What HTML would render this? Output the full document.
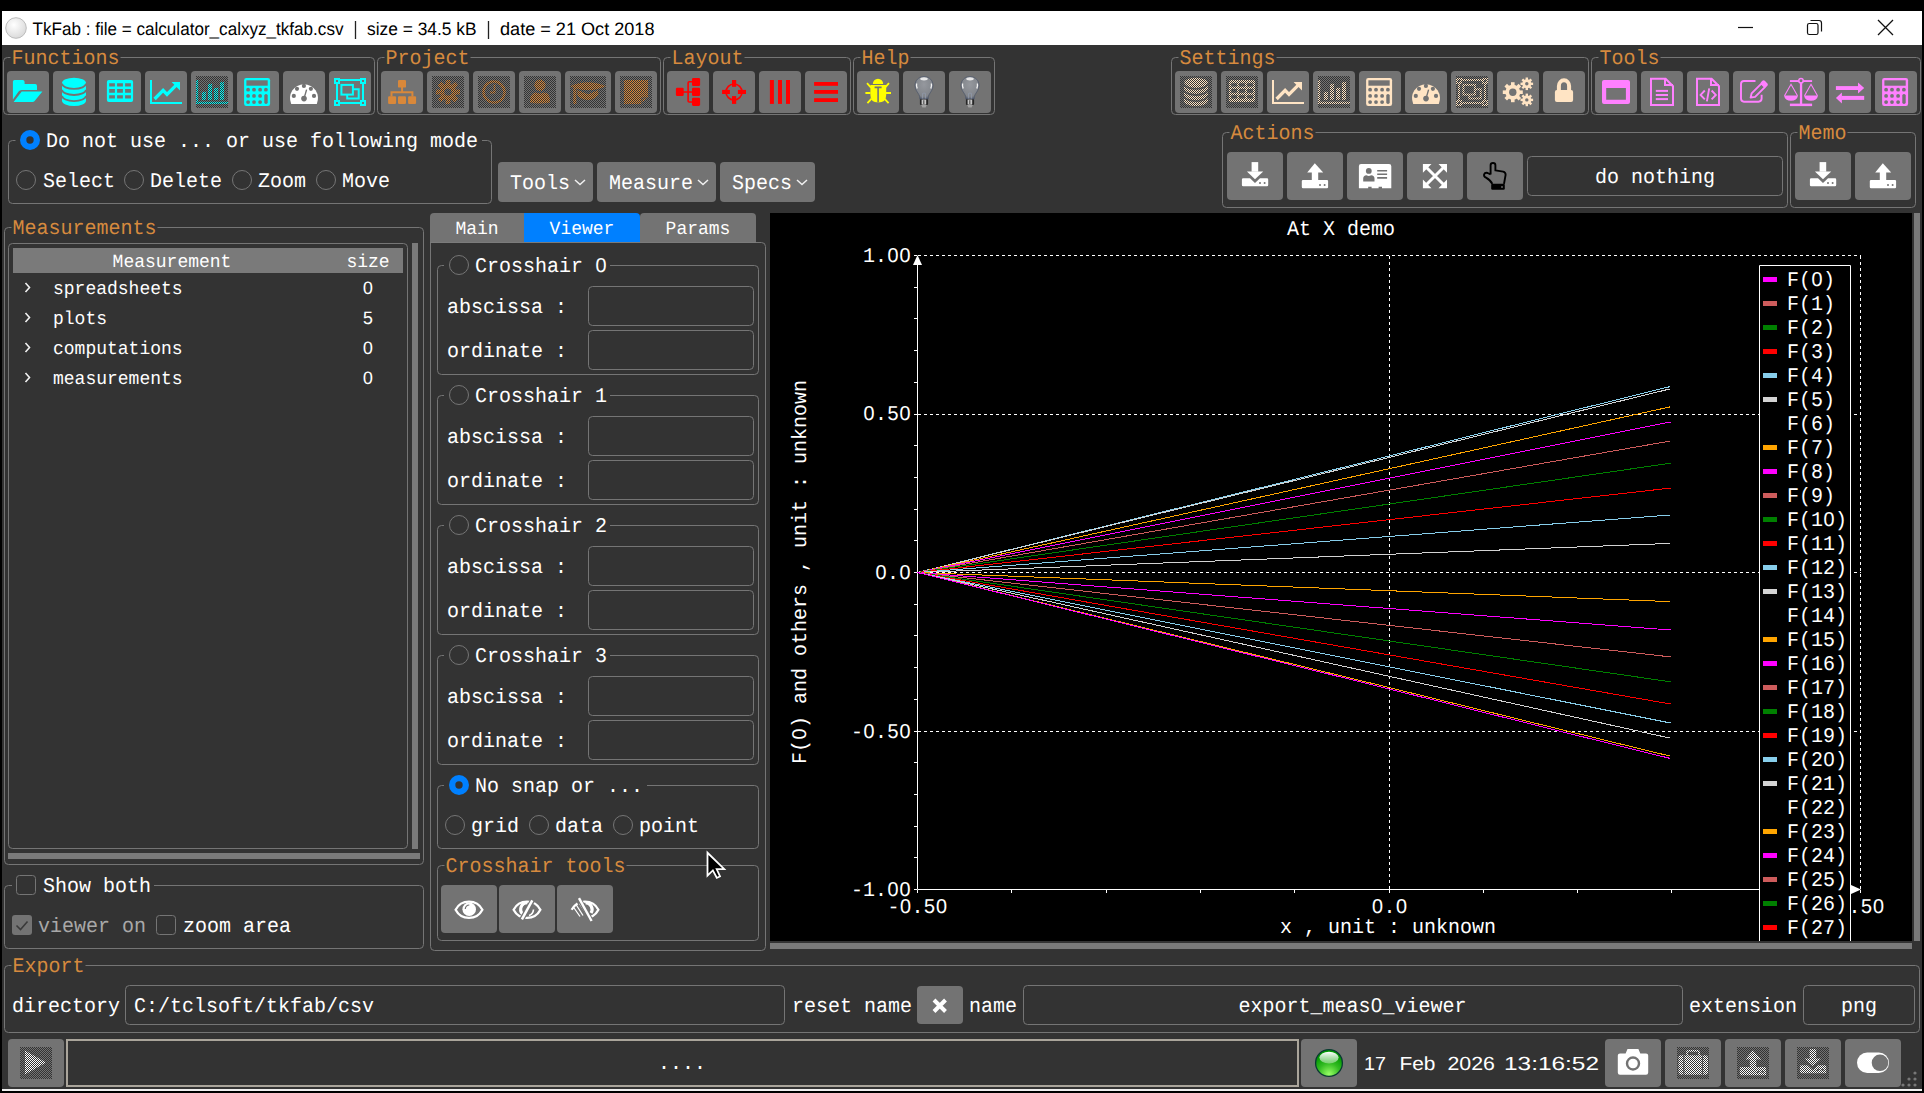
<!DOCTYPE html>
<html><head><meta charset="utf-8"><title>TkFab</title>
<style>html,body{margin:0;padding:0;background:#000;overflow:hidden;width:1924px;height:1093px}svg{display:block}</style>
</head><body>
<svg width="1924" height="1093" viewBox="0 0 1924 1093" style="font-family:'Liberation Mono';text-rendering:geometricPrecision">
<rect x="0" y="0" width="1924" height="1093" rx="0" fill="#000000" />
<rect x="2" y="45" width="1920" height="1044" rx="0" fill="#333333" />
<rect x="2" y="11" width="1920" height="34" rx="0" fill="#ffffff" />
<rect x="2" y="1089" width="1920" height="2" rx="0" fill="#f0f0f0" />
<defs><radialGradient id="tg" cx="0.4" cy="0.35" r="0.7"><stop offset="0" stop-color="#ffffff"/><stop offset="1" stop-color="#d8d8d8"/></radialGradient><radialGradient id="led" cx="0.5" cy="0.3" r="0.7"><stop offset="0" stop-color="#e8ffe0"/><stop offset="0.35" stop-color="#22bb11"/><stop offset="0.8" stop-color="#119900"/><stop offset="1" stop-color="#66dd44"/></radialGradient><pattern id="stip" width="2" height="2" patternUnits="userSpaceOnUse"><rect x="0" y="0" width="1" height="1" fill="#333333"/><rect x="1" y="1" width="1" height="1" fill="#333333"/></pattern></defs>
<circle cx="16" cy="28" r="10.3" fill="url(#tg)" stroke="#bdbdbd" stroke-width="1"/>
<text x="32.5" y="35" font-family="Liberation Sans" font-size="18" fill="#000000" textLength="311" lengthAdjust="spacingAndGlyphs" xml:space="preserve">TkFab : file = calculator_calxyz_tkfab.csv</text>
<text x="367" y="35" font-family="Liberation Sans" font-size="18" fill="#000000" textLength="109.5" lengthAdjust="spacingAndGlyphs" xml:space="preserve">size = 34.5 kB</text>
<text x="500" y="35" font-family="Liberation Sans" font-size="18" fill="#000000" textLength="154.5" lengthAdjust="spacingAndGlyphs" xml:space="preserve">date = 21 Oct 2018</text>
<path d="M355.5,21 V39 M488.5,21 V39" stroke="#222" stroke-width="1.3"/>
<path d="M1738,27.5 H1753" stroke="#111" stroke-width="1.2"/>
<rect x="1807.5" y="23.5" width="10.5" height="11" rx="1.8" fill="none" stroke="#111" stroke-width="1.2"/>
<path d="M1810.5,20.5 H1819 Q1821.5,20.5 1821.5,23 V31.5" fill="none" stroke="#111" stroke-width="1.2"/>
<path d="M1878,20 L1893,35 M1893,20 L1878,35" stroke="#111" stroke-width="1.3"/>
<path d="M10.5,57.5 L7.5,57.5 Q3.5,57.5 3.5,61.5 L3.5,110.5 Q3.5,114.5 7.5,114.5 L370.5,114.5 Q374.5,114.5 374.5,110.5 L374.5,61.5 Q374.5,57.5 370.5,57.5 L120.5,57.5" fill="none" stroke="#757575" stroke-width="1"/>
<text x="11.5" y="64.0" font-family="Liberation Mono" font-size="20" fill="#d68a3e" text-anchor="start" xml:space="preserve"  transform="matrix(1 0 0 1.04 0 -2.560)">Functions</text>
<rect x="7" y="71" width="42" height="42" rx="4" fill="#737373" />
<g transform="translate(12.0,76.0)">
<path d="M0.9,5.6 Q0.9,3.9 2.6,3.9 H10.6 Q12.6,3.9 12.6,5.9 V7.9 H23.2 Q25,7.9 25,9.9 V14 H9.6 Q7.6,14 6.6,15.6 L0.9,23.5 Z" fill="#00ffff"/><path d="M9.7,15.6 H30.4 L22.4,25.3 Q21.7,26.1 20.6,26.1 H1.6 Z" fill="#00ffff"/>
</g>
<rect x="53" y="71" width="42" height="42" rx="4" fill="#737373" />
<g transform="translate(58.0,76.0)">
<path d="M4,7 A12,5.3 0 0 1 28,7 V24.8 A12,5.3 0 0 1 4,24.8 Z" fill="#00ffff"/><path d="M4,7.6 A12,5.3 0 0 0 28,7.6 M4,13.7 A12,5.3 0 0 0 28,13.7 M4,19.8 A12,5.3 0 0 0 28,19.8" fill="none" stroke="#737373" stroke-width="1.8"/>
</g>
<rect x="99" y="71" width="42" height="42" rx="4" fill="#737373" />
<g transform="translate(104.0,76.0)">
<path fill-rule="evenodd" d="M4.9,3.9 H27.1 Q29.1,3.9 29.1,5.9 V24.1 Q29.1,26.1 27.1,26.1 H4.9 Q2.9,26.1 2.9,24.1 V5.9 Q2.9,3.9 4.9,3.9 Z M5.2,7.3 H10.9 V10.6 H5.2 Z M5.2,13.1 H10.9 V16.7 H5.2 Z M5.2,19.3 H10.9 V22.6 H5.2 Z M13.1,7.3 H18.9 V10.6 H13.1 Z M13.1,13.1 H18.9 V16.7 H13.1 Z M13.1,19.3 H18.9 V22.6 H13.1 Z M21.1,7.3 H26.9 V10.6 H21.1 Z M21.1,13.1 H26.9 V16.7 H21.1 Z M21.1,19.3 H26.9 V22.6 H21.1 Z" fill="#00ffff"/>
</g>
<rect x="145" y="71" width="42" height="42" rx="4" fill="#737373" />
<g transform="translate(150.0,76.0)">
<path d="M0,3.9 H2 V25.9 H32 V27.9 H0 Z" fill="#00ffff"/><path d="M4.6,23 L13.1,14.4 L17,18.4 L26.5,8.9" fill="none" stroke="#00ffff" stroke-width="3.3" stroke-linejoin="miter"/><path d="M21.6,6 H30 V14.4 Z" fill="#00ffff"/>
</g>
<rect x="191" y="71" width="42" height="42" rx="4" fill="#737373" />
<g transform="translate(196.0,76.0)">
<path d="M0,3.9 H2.2 V25.7 H32 V27.9 H0 Z" fill="#00ffff"/><rect x="5.9" y="15.9" width="4" height="8" fill="#00ffff"/><rect x="12" y="7.9" width="4" height="16" fill="#00ffff"/><rect x="18" y="11.9" width="4.2" height="12" fill="#00ffff"/><rect x="24" y="6.1" width="4" height="17.8" fill="#00ffff"/><rect x="0" y="0" width="32" height="32" fill="url(#stip)"/>
</g>
<rect x="237" y="71" width="42" height="42" rx="4" fill="#737373" />
<g transform="translate(242.0,76.0)">
<rect x="2.1" y="2.1" width="26" height="27.9" rx="2.2" fill="#00ffff"/><rect x="4.4" y="4.3" width="21.3" height="5.4" fill="#737373"/><rect x="4.3" y="11.6" width="21.6" height="16.3" fill="#00ffff"/><circle cx="6.1" cy="13.7" r="1.9" fill="#737373"/><circle cx="6.1" cy="19.9" r="1.9" fill="#737373"/><circle cx="6.1" cy="26.1" r="1.9" fill="#737373"/><circle cx="12.0" cy="13.7" r="1.9" fill="#737373"/><circle cx="12.0" cy="19.9" r="1.9" fill="#737373"/><circle cx="12.0" cy="26.1" r="1.9" fill="#737373"/><circle cx="18.1" cy="13.7" r="1.9" fill="#737373"/><circle cx="18.1" cy="19.9" r="1.9" fill="#737373"/><circle cx="18.1" cy="26.1" r="1.9" fill="#737373"/><circle cx="23.9" cy="13.7" r="1.9" fill="#737373"/><rect x="22.3" y="17.9" width="3.4" height="10.1" rx="1.7" fill="#737373"/>
</g>
<rect x="283" y="71" width="42" height="42" rx="4" fill="#737373" />
<g transform="translate(288.0,76.0)">
<path d="M3.2,27.9 A14,14 0 1 1 28.8,27.9 Z" fill="#ffffff"/><circle cx="5.8" cy="19.9" r="2.1" fill="#737373"/><circle cx="9" cy="12.8" r="2.1" fill="#737373"/><circle cx="15.9" cy="9.9" r="2.1" fill="#737373"/><circle cx="22.9" cy="12.8" r="2.1" fill="#737373"/><circle cx="26" cy="19.9" r="2.1" fill="#737373"/><circle cx="16" cy="22.6" r="2.8" fill="#737373"/><path d="M16,22.6 L18.6,13.6" stroke="#737373" stroke-width="1.4"/>
</g>
<rect x="329" y="71" width="42" height="42" rx="4" fill="#737373" />
<g transform="translate(334.0,76.0)">
<rect x="3" y="4" width="26" height="23" fill="none" stroke="#00ffff" stroke-width="2"/><rect x="0" y="2" width="6" height="6" fill="#00ffff"/><rect x="2" y="4" width="2" height="2" fill="#737373"/><rect x="26" y="2" width="6" height="6" fill="#00ffff"/><rect x="28" y="4" width="2" height="2" fill="#737373"/><rect x="0" y="24" width="6" height="6" fill="#00ffff"/><rect x="2" y="26" width="2" height="2" fill="#737373"/><rect x="26" y="24" width="6" height="6" fill="#00ffff"/><rect x="28" y="26" width="2" height="2" fill="#737373"/><rect x="7.4" y="8.9" width="11.5" height="9.7" fill="none" stroke="#00ffff" stroke-width="2"/><path d="M18.9,13.3 H24.7 V22.6 H13.2 V18.6" fill="none" stroke="#00ffff" stroke-width="2"/>
</g>
<path d="M384.5,57.5 L381.5,57.5 Q377.5,57.5 377.5,61.5 L377.5,110.5 Q377.5,114.5 381.5,114.5 L656.5,114.5 Q660.5,114.5 660.5,110.5 L660.5,61.5 Q660.5,57.5 656.5,57.5 L470.5,57.5" fill="none" stroke="#757575" stroke-width="1"/>
<text x="385.5" y="64.0" font-family="Liberation Mono" font-size="20" fill="#d68a3e" text-anchor="start" xml:space="preserve"  transform="matrix(1 0 0 1.04 0 -2.560)">Project</text>
<rect x="381" y="71" width="42" height="42" rx="4" fill="#737373" />
<g transform="translate(386.0,76.0)">
<rect x="12" y="3.9" width="8" height="7.7" rx="1.2" fill="#d9883a"/><path d="M16.1,11 V16.3 M5.5,20.5 V16.3 H26.4 V20.5" fill="none" stroke="#d9883a" stroke-width="2"/><rect x="2.1" y="20.3" width="8" height="7.6" rx="1.2" fill="#d9883a"/><rect x="12" y="20.3" width="8" height="7.6" rx="1.2" fill="#d9883a"/><rect x="22.1" y="20.3" width="8" height="7.6" rx="1.2" fill="#d9883a"/>
</g>
<rect x="427" y="71" width="42" height="42" rx="4" fill="#737373" />
<g transform="translate(432.0,76.0)">
<rect x="-2.4" y="-12" width="4.8" height="6" fill="#d9883a" transform="translate(16,16) rotate(0)"/><rect x="-2.4" y="-12" width="4.8" height="6" fill="#d9883a" transform="translate(16,16) rotate(45)"/><rect x="-2.4" y="-12" width="4.8" height="6" fill="#d9883a" transform="translate(16,16) rotate(90)"/><rect x="-2.4" y="-12" width="4.8" height="6" fill="#d9883a" transform="translate(16,16) rotate(135)"/><rect x="-2.4" y="-12" width="4.8" height="6" fill="#d9883a" transform="translate(16,16) rotate(180)"/><rect x="-2.4" y="-12" width="4.8" height="6" fill="#d9883a" transform="translate(16,16) rotate(225)"/><rect x="-2.4" y="-12" width="4.8" height="6" fill="#d9883a" transform="translate(16,16) rotate(270)"/><rect x="-2.4" y="-12" width="4.8" height="6" fill="#d9883a" transform="translate(16,16) rotate(315)"/><circle cx="16" cy="16" r="8.3" fill="#d9883a"/><circle cx="16" cy="16" r="3.6" fill="#737373"/><rect x="0" y="0" width="32" height="32" fill="url(#stip)"/>
</g>
<rect x="473" y="71" width="42" height="42" rx="4" fill="#737373" />
<g transform="translate(478.0,76.0)">
<circle cx="16" cy="16" r="10.5" fill="none" stroke="#d9883a" stroke-width="2.6"/><path d="M16.5,8.5 V16.5 H12" fill="none" stroke="#d9883a" stroke-width="1.8"/><rect x="0" y="0" width="32" height="32" fill="url(#stip)"/>
</g>
<rect x="519" y="71" width="42" height="42" rx="4" fill="#737373" />
<g transform="translate(524.0,76.0)">
<circle cx="16" cy="9.2" r="5.6" fill="#d9883a"/><path d="M6,26.5 Q5.5,17 12,16.5 Q16,18.5 20,16.5 Q26.5,17 26,26.5 Q16,28.5 6,26.5 Z" fill="#d9883a"/><rect x="0" y="0" width="32" height="32" fill="url(#stip)"/>
</g>
<rect x="565" y="71" width="46" height="42" rx="4" fill="#737373" />
<g transform="translate(572.0,76.0)">
<path d="M-2,10.2 Q16,2.5 34,10.2 Q16,18 -2,10.2 Z" fill="#d9883a"/><path d="M5.4,14 V19.5 Q16,28.5 26.2,19.5 V14 L16,18.2 Z" fill="#d9883a"/><path d="M2.8,10.6 V28" stroke="#d9883a" stroke-width="3"/><rect x="-2" y="0" width="36" height="32" fill="url(#stip)"/>
</g>
<rect x="615" y="71" width="42" height="42" rx="4" fill="#737373" />
<g transform="translate(620.0,76.0)">
<path d="M4,4 H28 V21 L21,28 H4 Z" fill="#d9883a"/><path d="M22,28 V22 H28" fill="none" stroke="#737373" stroke-width="1.2"/><rect x="0" y="0" width="32" height="32" fill="url(#stip)"/>
</g>
<path d="M670.5,57.5 L667.5,57.5 Q663.5,57.5 663.5,61.5 L663.5,110.5 Q663.5,114.5 667.5,114.5 L846.5,114.5 Q850.5,114.5 850.5,110.5 L850.5,61.5 Q850.5,57.5 846.5,57.5 L744.5,57.5" fill="none" stroke="#757575" stroke-width="1"/>
<text x="671.5" y="64.0" font-family="Liberation Mono" font-size="20" fill="#d68a3e" text-anchor="start" xml:space="preserve"  transform="matrix(1 0 0 1.04 0 -2.560)">Layout</text>
<rect x="667" y="71" width="42" height="42" rx="4" fill="#737373" />
<g transform="translate(672.0,76.0)">
<rect x="3.9" y="11.8" width="7.8" height="8.3" rx="1.3" fill="#ff0000"/><rect x="20" y="1.9" width="8.1" height="8.2" rx="1.3" fill="#ff0000"/><rect x="20" y="11.8" width="8.1" height="8.2" rx="1.3" fill="#ff0000"/><rect x="20" y="21.7" width="8.1" height="8.2" rx="1.3" fill="#ff0000"/><path d="M11,16 H20 M22,5.8 H17.2 Q16.1,5.8 16.1,7 V25 Q16.1,26 17.2,26 H22" fill="none" stroke="#ff0000" stroke-width="1.6"/>
</g>
<rect x="713" y="71" width="42" height="42" rx="4" fill="#737373" />
<g transform="translate(718.0,76.0)">
<circle cx="16" cy="16" r="8" fill="none" stroke="#ff0000" stroke-width="1.6"/><rect x="14" y="4" width="4.2" height="6.8" fill="#ff0000"/><rect x="14" y="20.1" width="4.2" height="7.8" fill="#ff0000"/><rect x="4.1" y="13.9" width="7.8" height="4.1" fill="#ff0000"/><rect x="19.9" y="13.9" width="8.1" height="4.1" fill="#ff0000"/>
</g>
<rect x="759" y="71" width="42" height="42" rx="4" fill="#737373" />
<g transform="translate(764.0,76.0)">
<rect x="5.9" y="4" width="4" height="23.9" fill="#ff0000"/><rect x="14" y="4" width="4" height="23.9" fill="#ff0000"/><rect x="22" y="4" width="4" height="23.9" fill="#ff0000"/>
</g>
<rect x="805" y="71" width="42" height="42" rx="4" fill="#737373" />
<g transform="translate(810.0,76.0)">
<rect x="4.1" y="6" width="23.9" height="3.8" fill="#ff0000"/><rect x="4.1" y="14" width="23.9" height="3.8" fill="#ff0000"/><rect x="4.1" y="22.2" width="23.9" height="3.8" fill="#ff0000"/>
</g>
<path d="M860.5,57.5 L857.5,57.5 Q853.5,57.5 853.5,61.5 L853.5,110.5 Q853.5,114.5 857.5,114.5 L990.5,114.5 Q994.5,114.5 994.5,110.5 L994.5,61.5 Q994.5,57.5 990.5,57.5 L910.5,57.5" fill="none" stroke="#757575" stroke-width="1"/>
<text x="861.5" y="64.0" font-family="Liberation Mono" font-size="20" fill="#d68a3e" text-anchor="start" xml:space="preserve"  transform="matrix(1 0 0 1.04 0 -2.560)">Help</text>
<rect x="857" y="71" width="42" height="42" rx="4" fill="#737373" />
<g transform="translate(862.0,76.0)">
<path d="M10.8,8.1 A5.2,5.4 0 0 1 21.2,8.1 Z" fill="#ffff00"/><path d="M8.4,8.9 H24.2 V19 Q24.2,26.5 16.2,26.5 Q8.4,26.5 8.4,19 Z" fill="#ffff00"/><path d="M16.1,11.4 V26.5 M12.6,11.4 H19.6" stroke="#737373" stroke-width="1.6"/><path d="M3.4,17 H8.5 M24,17 H29 M5,7.2 L9,11.6 M27,7.2 L23,11.6 M5.4,27.2 L9.6,22.6 M26.6,27.2 L22.4,22.6" stroke="#ffff00" stroke-width="1.8"/>
</g>
<rect x="903" y="71" width="42" height="42" rx="4" fill="#737373" />
<g transform="translate(908.0,76.0)">
<defs><radialGradient id="bg1" cx="0.5" cy="0.35" r="0.65"><stop offset="0" stop-color="#a4a8b0" stop-opacity="0.7"/><stop offset="0.8" stop-color="#8c929c" stop-opacity="0.6"/><stop offset="1" stop-color="#4a5468" stop-opacity="0.9"/></radialGradient></defs><path d="M16,0.6 C21.4,0.6 25,4.6 25,9.6 C25,13.6 22.4,16.3 21,18.8 C20.3,20 20.1,21.4 20.1,23.3 H11.9 C11.9,21.4 11.7,20 11,18.8 C9.6,16.3 7,13.6 7,9.6 C7,4.6 10.6,0.6 16,0.6 Z" fill="url(#bg1)" stroke="#4a5468" stroke-width="0.7"/><ellipse cx="16" cy="2.8" rx="3.8" ry="1.6" fill="#f2f2f2" opacity="0.9"/><path d="M8.6,7.5 Q8.2,10 9.2,12.5" fill="none" stroke="#f4f4f4" stroke-width="1.3"/><path d="M23.4,7.5 Q23.8,10 22.8,12.5" fill="none" stroke="#f4f4f4" stroke-width="1.3"/><path d="M14.5,22.5 V17.5 Q16,16.5 17.5,17.5 V22.5" fill="none" stroke="#8f98a8" stroke-width="0.8"/><rect x="11.9" y="23.3" width="8.2" height="5.6" rx="0.8" fill="#262626"/><rect x="13.6" y="23.6" width="4.6" height="5" fill="#c8c8c8"/><rect x="15.2" y="24.2" width="1.2" height="3.8" fill="#555"/><path d="M13.2,28.9 H18.8 L17.6,31.4 H14.4 Z" fill="#a0a0a0"/>
</g>
<rect x="949" y="71" width="42" height="42" rx="4" fill="#737373" />
<g transform="translate(954.0,76.0)">
<defs><radialGradient id="bg1" cx="0.5" cy="0.35" r="0.65"><stop offset="0" stop-color="#a4a8b0" stop-opacity="0.7"/><stop offset="0.8" stop-color="#8c929c" stop-opacity="0.6"/><stop offset="1" stop-color="#4a5468" stop-opacity="0.9"/></radialGradient></defs><path d="M16,0.6 C21.4,0.6 25,4.6 25,9.6 C25,13.6 22.4,16.3 21,18.8 C20.3,20 20.1,21.4 20.1,23.3 H11.9 C11.9,21.4 11.7,20 11,18.8 C9.6,16.3 7,13.6 7,9.6 C7,4.6 10.6,0.6 16,0.6 Z" fill="url(#bg1)" stroke="#4a5468" stroke-width="0.7"/><ellipse cx="16" cy="2.8" rx="3.8" ry="1.6" fill="#f2f2f2" opacity="0.9"/><path d="M8.6,7.5 Q8.2,10 9.2,12.5" fill="none" stroke="#f4f4f4" stroke-width="1.3"/><path d="M23.4,7.5 Q23.8,10 22.8,12.5" fill="none" stroke="#f4f4f4" stroke-width="1.3"/><path d="M14.5,22.5 V17.5 Q16,16.5 17.5,17.5 V22.5" fill="none" stroke="#8f98a8" stroke-width="0.8"/><rect x="11.9" y="23.3" width="8.2" height="5.6" rx="0.8" fill="#262626"/><rect x="13.6" y="23.6" width="4.6" height="5" fill="#c8c8c8"/><rect x="15.2" y="24.2" width="1.2" height="3.8" fill="#555"/><path d="M13.2,28.9 H18.8 L17.6,31.4 H14.4 Z" fill="#a0a0a0"/>
</g>
<path d="M1178.5,57.5 L1175.5,57.5 Q1171.5,57.5 1171.5,61.5 L1171.5,110.5 Q1171.5,114.5 1175.5,114.5 L1584.5,114.5 Q1588.5,114.5 1588.5,110.5 L1588.5,61.5 Q1588.5,57.5 1584.5,57.5 L1276.5,57.5" fill="none" stroke="#757575" stroke-width="1"/>
<text x="1179.5" y="64.0" font-family="Liberation Mono" font-size="20" fill="#d68a3e" text-anchor="start" xml:space="preserve"  transform="matrix(1 0 0 1.04 0 -2.560)">Settings</text>
<rect x="1175" y="71" width="42" height="42" rx="4" fill="#737373" />
<g transform="translate(1180.0,76.0)">
<path d="M4,7 A12,5.3 0 0 1 28,7 V24.8 A12,5.3 0 0 1 4,24.8 Z" fill="#ffe4c4"/><path d="M4,7.6 A12,5.3 0 0 0 28,7.6 M4,13.7 A12,5.3 0 0 0 28,13.7 M4,19.8 A12,5.3 0 0 0 28,19.8" fill="none" stroke="#737373" stroke-width="1.8"/><rect x="0" y="0" width="32" height="32" fill="url(#stip)"/>
</g>
<rect x="1221" y="71" width="42" height="42" rx="4" fill="#737373" />
<g transform="translate(1226.0,76.0)">
<path fill-rule="evenodd" d="M4.9,3.9 H27.1 Q29.1,3.9 29.1,5.9 V24.1 Q29.1,26.1 27.1,26.1 H4.9 Q2.9,26.1 2.9,24.1 V5.9 Q2.9,3.9 4.9,3.9 Z M5.2,7.3 H10.9 V10.6 H5.2 Z M5.2,13.1 H10.9 V16.7 H5.2 Z M5.2,19.3 H10.9 V22.6 H5.2 Z M13.1,7.3 H18.9 V10.6 H13.1 Z M13.1,13.1 H18.9 V16.7 H13.1 Z M13.1,19.3 H18.9 V22.6 H13.1 Z M21.1,7.3 H26.9 V10.6 H21.1 Z M21.1,13.1 H26.9 V16.7 H21.1 Z M21.1,19.3 H26.9 V22.6 H21.1 Z" fill="#ffe4c4"/><rect x="0" y="0" width="32" height="32" fill="url(#stip)"/>
</g>
<rect x="1267" y="71" width="42" height="42" rx="4" fill="#737373" />
<g transform="translate(1272.0,76.0)">
<path d="M0,3.9 H2 V25.9 H32 V27.9 H0 Z" fill="#ffe4c4"/><path d="M4.6,23 L13.1,14.4 L17,18.4 L26.5,8.9" fill="none" stroke="#ffe4c4" stroke-width="3.3" stroke-linejoin="miter"/><path d="M21.6,6 H30 V14.4 Z" fill="#ffe4c4"/>
</g>
<rect x="1313" y="71" width="42" height="42" rx="4" fill="#737373" />
<g transform="translate(1318.0,76.0)">
<path d="M0,3.9 H2.2 V25.7 H32 V27.9 H0 Z" fill="#ffe4c4"/><rect x="5.9" y="15.9" width="4" height="8" fill="#ffe4c4"/><rect x="12" y="7.9" width="4" height="16" fill="#ffe4c4"/><rect x="18" y="11.9" width="4.2" height="12" fill="#ffe4c4"/><rect x="24" y="6.1" width="4" height="17.8" fill="#ffe4c4"/><rect x="0" y="0" width="32" height="32" fill="url(#stip)"/>
</g>
<rect x="1359" y="71" width="42" height="42" rx="4" fill="#737373" />
<g transform="translate(1364.0,76.0)">
<rect x="2.1" y="2.1" width="26" height="27.9" rx="2.2" fill="#ffe4c4"/><rect x="4.4" y="4.3" width="21.3" height="5.4" fill="#737373"/><rect x="4.3" y="11.6" width="21.6" height="16.3" fill="#ffe4c4"/><circle cx="6.1" cy="13.7" r="1.9" fill="#737373"/><circle cx="6.1" cy="19.9" r="1.9" fill="#737373"/><circle cx="6.1" cy="26.1" r="1.9" fill="#737373"/><circle cx="12.0" cy="13.7" r="1.9" fill="#737373"/><circle cx="12.0" cy="19.9" r="1.9" fill="#737373"/><circle cx="12.0" cy="26.1" r="1.9" fill="#737373"/><circle cx="18.1" cy="13.7" r="1.9" fill="#737373"/><circle cx="18.1" cy="19.9" r="1.9" fill="#737373"/><circle cx="18.1" cy="26.1" r="1.9" fill="#737373"/><circle cx="23.9" cy="13.7" r="1.9" fill="#737373"/><rect x="22.3" y="17.9" width="3.4" height="10.1" rx="1.7" fill="#737373"/>
</g>
<rect x="1405" y="71" width="42" height="42" rx="4" fill="#737373" />
<g transform="translate(1410.0,76.0)">
<path d="M3.2,27.9 A14,14 0 1 1 28.8,27.9 Z" fill="#ffe4c4"/><circle cx="5.8" cy="19.9" r="2.1" fill="#737373"/><circle cx="9" cy="12.8" r="2.1" fill="#737373"/><circle cx="15.9" cy="9.9" r="2.1" fill="#737373"/><circle cx="22.9" cy="12.8" r="2.1" fill="#737373"/><circle cx="26" cy="19.9" r="2.1" fill="#737373"/><circle cx="16" cy="22.6" r="2.8" fill="#737373"/><path d="M16,22.6 L18.6,13.6" stroke="#737373" stroke-width="1.4"/>
</g>
<rect x="1451" y="71" width="42" height="42" rx="4" fill="#737373" />
<g transform="translate(1456.0,76.0)">
<rect x="3" y="4" width="26" height="23" fill="none" stroke="#ffe4c4" stroke-width="2"/><rect x="0" y="2" width="6" height="6" fill="#ffe4c4"/><rect x="2" y="4" width="2" height="2" fill="#737373"/><rect x="26" y="2" width="6" height="6" fill="#ffe4c4"/><rect x="28" y="4" width="2" height="2" fill="#737373"/><rect x="0" y="24" width="6" height="6" fill="#ffe4c4"/><rect x="2" y="26" width="2" height="2" fill="#737373"/><rect x="26" y="24" width="6" height="6" fill="#ffe4c4"/><rect x="28" y="26" width="2" height="2" fill="#737373"/><rect x="7.4" y="8.9" width="11.5" height="9.7" fill="none" stroke="#ffe4c4" stroke-width="2"/><path d="M18.9,13.3 H24.7 V22.6 H13.2 V18.6" fill="none" stroke="#ffe4c4" stroke-width="2"/><rect x="0" y="0" width="32" height="32" fill="url(#stip)"/>
</g>
<rect x="1497" y="71" width="42" height="42" rx="4" fill="#737373" />
<g transform="translate(1502.0,76.0)">
<rect x="-1.8" y="-10" width="3.6" height="3.5" fill="#ffe4c4" transform="translate(10.8,16.2) rotate(0.0)"/><rect x="-1.8" y="-10" width="3.6" height="3.5" fill="#ffe4c4" transform="translate(10.8,16.2) rotate(45.0)"/><rect x="-1.8" y="-10" width="3.6" height="3.5" fill="#ffe4c4" transform="translate(10.8,16.2) rotate(90.0)"/><rect x="-1.8" y="-10" width="3.6" height="3.5" fill="#ffe4c4" transform="translate(10.8,16.2) rotate(135.0)"/><rect x="-1.8" y="-10" width="3.6" height="3.5" fill="#ffe4c4" transform="translate(10.8,16.2) rotate(180.0)"/><rect x="-1.8" y="-10" width="3.6" height="3.5" fill="#ffe4c4" transform="translate(10.8,16.2) rotate(225.0)"/><rect x="-1.8" y="-10" width="3.6" height="3.5" fill="#ffe4c4" transform="translate(10.8,16.2) rotate(270.0)"/><rect x="-1.8" y="-10" width="3.6" height="3.5" fill="#ffe4c4" transform="translate(10.8,16.2) rotate(315.0)"/><circle cx="10.8" cy="16.2" r="7.5" fill="#ffe4c4"/><circle cx="10.8" cy="16.2" r="3.7" fill="#737373"/><rect x="-1.2" y="-6.3" width="2.4" height="2.8" fill="#ffe4c4" transform="translate(24.8,7.8) rotate(0.0)"/><rect x="-1.2" y="-6.3" width="2.4" height="2.8" fill="#ffe4c4" transform="translate(24.8,7.8) rotate(45.0)"/><rect x="-1.2" y="-6.3" width="2.4" height="2.8" fill="#ffe4c4" transform="translate(24.8,7.8) rotate(90.0)"/><rect x="-1.2" y="-6.3" width="2.4" height="2.8" fill="#ffe4c4" transform="translate(24.8,7.8) rotate(135.0)"/><rect x="-1.2" y="-6.3" width="2.4" height="2.8" fill="#ffe4c4" transform="translate(24.8,7.8) rotate(180.0)"/><rect x="-1.2" y="-6.3" width="2.4" height="2.8" fill="#ffe4c4" transform="translate(24.8,7.8) rotate(225.0)"/><rect x="-1.2" y="-6.3" width="2.4" height="2.8" fill="#ffe4c4" transform="translate(24.8,7.8) rotate(270.0)"/><rect x="-1.2" y="-6.3" width="2.4" height="2.8" fill="#ffe4c4" transform="translate(24.8,7.8) rotate(315.0)"/><circle cx="24.8" cy="7.8" r="4.5" fill="#ffe4c4"/><circle cx="24.8" cy="7.8" r="1.7" fill="#737373"/><rect x="-1.2" y="-6.3" width="2.4" height="2.8" fill="#ffe4c4" transform="translate(24.8,23.9) rotate(0.0)"/><rect x="-1.2" y="-6.3" width="2.4" height="2.8" fill="#ffe4c4" transform="translate(24.8,23.9) rotate(45.0)"/><rect x="-1.2" y="-6.3" width="2.4" height="2.8" fill="#ffe4c4" transform="translate(24.8,23.9) rotate(90.0)"/><rect x="-1.2" y="-6.3" width="2.4" height="2.8" fill="#ffe4c4" transform="translate(24.8,23.9) rotate(135.0)"/><rect x="-1.2" y="-6.3" width="2.4" height="2.8" fill="#ffe4c4" transform="translate(24.8,23.9) rotate(180.0)"/><rect x="-1.2" y="-6.3" width="2.4" height="2.8" fill="#ffe4c4" transform="translate(24.8,23.9) rotate(225.0)"/><rect x="-1.2" y="-6.3" width="2.4" height="2.8" fill="#ffe4c4" transform="translate(24.8,23.9) rotate(270.0)"/><rect x="-1.2" y="-6.3" width="2.4" height="2.8" fill="#ffe4c4" transform="translate(24.8,23.9) rotate(315.0)"/><circle cx="24.8" cy="23.9" r="4.5" fill="#ffe4c4"/><circle cx="24.8" cy="23.9" r="1.7" fill="#737373"/>
</g>
<rect x="1543" y="71" width="42" height="42" rx="4" fill="#737373" />
<g transform="translate(1548.0,76.0)">
<path d="M10.9,14 V10 A5.1,5.7 0 0 1 21.1,10 V14" fill="none" stroke="#ffe4c4" stroke-width="4"/><rect x="6.9" y="13.9" width="18.2" height="12.1" rx="2" fill="#ffe4c4"/>
</g>
<path d="M1598.5,57.5 L1595.5,57.5 Q1591.5,57.5 1591.5,61.5 L1591.5,110.5 Q1591.5,114.5 1595.5,114.5 L1916.5,114.5 Q1920.5,114.5 1920.5,110.5 L1920.5,61.5 Q1920.5,57.5 1916.5,57.5 L1660.5,57.5" fill="none" stroke="#757575" stroke-width="1"/>
<text x="1599.5" y="64.0" font-family="Liberation Mono" font-size="20" fill="#d68a3e" text-anchor="start" xml:space="preserve"  transform="matrix(1 0 0 1.04 0 -2.560)">Tools</text>
<rect x="1595" y="71" width="42" height="42" rx="4" fill="#737373" />
<g transform="translate(1600.0,76.0)">
<path fill-rule="evenodd" d="M4,3.9 H28 Q30,3.9 30,5.9 V26 Q30,28 28,28 H4 Q2,28 2,26 V5.9 Q2,3.9 4,3.9 Z M6.2,12.1 V23.7 H25.9 V12.1 Z" fill="#ff80ff"/>
</g>
<rect x="1641" y="71" width="42" height="42" rx="4" fill="#737373" />
<g transform="translate(1646.0,76.0)">
<path d="M5,2.8 H19.6 L27,10.2 V29.1 H5 Z" fill="none" stroke="#ff80ff" stroke-width="2"/><path d="M19,2.8 V9 H27" fill="none" stroke="#ff80ff" stroke-width="2"/><rect x="9.8" y="13.9" width="12.2" height="2" fill="#ff80ff"/><rect x="9.8" y="18" width="12.2" height="2" fill="#ff80ff"/><rect x="9.8" y="22.1" width="12.2" height="2" fill="#ff80ff"/>
</g>
<rect x="1687" y="71" width="42" height="42" rx="4" fill="#737373" />
<g transform="translate(1692.0,76.0)">
<path d="M5,2.8 H19.6 L27,10.2 V29.1 H5 Z" fill="none" stroke="#ff80ff" stroke-width="2"/><path d="M19,2.8 V9 H27" fill="none" stroke="#ff80ff" stroke-width="2"/><path d="M12.8,14.5 L8.6,18.9 L12.8,23.3 M19.6,14.5 L23.8,18.9 L19.6,23.3 M17.2,12.4 L14.9,25.3" fill="none" stroke="#ff80ff" stroke-width="1.9"/>
</g>
<rect x="1733" y="71" width="42" height="42" rx="4" fill="#737373" />
<g transform="translate(1738.0,76.0)">
<path d="M17.5,5 H6 Q3,5 3,8 V22.6 Q3,25.7 6,25.7 H20.5 Q23.6,25.7 23.6,22.6 V18.8" fill="none" stroke="#ff80ff" stroke-width="1.9"/><path d="M12.6,21.6 L13.6,17.4 L23.4,7.6 L26.9,11.1 L17.1,20.9 Z" fill="none" stroke="#ff80ff" stroke-width="1.9" stroke-linejoin="round"/><path d="M24.4,4.8 Q25.6,3.8 26.8,4.8 L29.4,7.4 Q30.4,8.6 29.4,9.8 L27.6,11.6 L22.6,6.6 Z" fill="#ff80ff"/><path d="M12.4,22 L12.9,19.2 L15.4,21.6 Z" fill="#ff80ff"/>
</g>
<rect x="1779" y="71" width="46" height="42" rx="4" fill="#737373" />
<g transform="translate(1786.0,76.0)">
<rect x="3.9" y="4.1" width="22.2" height="1.9" fill="#ff80ff"/><circle cx="15" cy="4.8" r="2.2" fill="#737373" stroke="#ff80ff" stroke-width="1.5"/><rect x="13.9" y="6.5" width="2.3" height="21.5" fill="#ff80ff"/><rect x="3.9" y="27.6" width="22.2" height="2.5" fill="#ff80ff"/><path d="M-1.5,19.7 L5,8.3 L11.5,19.7 M18.5,19.7 L25,8.3 L31.5,19.7" fill="none" stroke="#ff80ff" stroke-width="1.1"/><path d="M-2,19.4 H12 Q11,24.8 5,24.8 Q-1,24.8 -2,19.4 Z M18,19.4 H32 Q31,24.8 25,24.8 Q19,24.8 18,19.4 Z" fill="#ff80ff"/>
</g>
<rect x="1829" y="71" width="42" height="42" rx="4" fill="#737373" />
<g transform="translate(1834.0,76.0)">
<rect x="1.9" y="10.1" width="22.5" height="3.9" fill="#ff80ff"/><path d="M24,6.4 L30.2,12 L24,17.6 Z" fill="#ff80ff"/><rect x="7.5" y="19.9" width="22.7" height="4" fill="#ff80ff"/><path d="M7.9,16.4 L1.9,22 L7.9,27.6 Z" fill="#ff80ff"/>
</g>
<rect x="1875" y="71" width="42" height="42" rx="4" fill="#737373" />
<g transform="translate(1880.0,76.0)">
<rect x="2.1" y="2.1" width="26" height="27.9" rx="2.2" fill="#ff80ff"/><rect x="4.4" y="4.3" width="21.3" height="5.4" fill="#737373"/><rect x="4.3" y="11.6" width="21.6" height="16.3" fill="#ff80ff"/><circle cx="6.1" cy="13.7" r="1.9" fill="#737373"/><circle cx="6.1" cy="19.9" r="1.9" fill="#737373"/><circle cx="6.1" cy="26.1" r="1.9" fill="#737373"/><circle cx="12.0" cy="13.7" r="1.9" fill="#737373"/><circle cx="12.0" cy="19.9" r="1.9" fill="#737373"/><circle cx="12.0" cy="26.1" r="1.9" fill="#737373"/><circle cx="18.1" cy="13.7" r="1.9" fill="#737373"/><circle cx="18.1" cy="19.9" r="1.9" fill="#737373"/><circle cx="18.1" cy="26.1" r="1.9" fill="#737373"/><circle cx="23.9" cy="13.7" r="1.9" fill="#737373"/><rect x="22.3" y="17.9" width="3.4" height="10.1" rx="1.7" fill="#737373"/>
</g>
<path d="M15.5,140.5 L12.5,140.5 Q8.5,140.5 8.5,144.5 L8.5,199.5 Q8.5,203.5 12.5,203.5 L487.5,203.5 Q491.5,203.5 491.5,199.5 L491.5,144.5 Q491.5,140.5 487.5,140.5 L482,140.5" fill="none" stroke="#757575" stroke-width="1"/>
<circle cx="30" cy="140" r="10" fill="#0080ff"/>
<circle cx="30" cy="140" r="3.7" fill="#333333"/>
<text x="46" y="147" font-family="Liberation Mono" font-size="20" fill="#ffffff" text-anchor="start" xml:space="preserve"  transform="matrix(1 0 0 1.04 0 -5.880)">Do not use ... or use following mode</text>
<circle cx="26" cy="180" r="9.5" fill="none" stroke="#757575" stroke-width="1"/>
<text x="43" y="187" font-family="Liberation Mono" font-size="20" fill="#ffffff" text-anchor="start" xml:space="preserve"  transform="matrix(1 0 0 1.04 0 -7.480)">Select</text>
<circle cx="134" cy="180" r="9.5" fill="none" stroke="#757575" stroke-width="1"/>
<text x="150" y="187" font-family="Liberation Mono" font-size="20" fill="#ffffff" text-anchor="start" xml:space="preserve"  transform="matrix(1 0 0 1.04 0 -7.480)">Delete</text>
<circle cx="242" cy="180" r="9.5" fill="none" stroke="#757575" stroke-width="1"/>
<text x="258" y="187" font-family="Liberation Mono" font-size="20" fill="#ffffff" text-anchor="start" xml:space="preserve"  transform="matrix(1 0 0 1.04 0 -7.480)">Zoom</text>
<circle cx="326" cy="180" r="9.5" fill="none" stroke="#757575" stroke-width="1"/>
<text x="342" y="187" font-family="Liberation Mono" font-size="20" fill="#ffffff" text-anchor="start" xml:space="preserve"  transform="matrix(1 0 0 1.04 0 -7.480)">Move</text>
<rect x="498" y="162" width="95" height="40" rx="4" fill="#737373" />
<text x="510" y="189" font-family="Liberation Mono" font-size="20" fill="#ffffff" text-anchor="start" xml:space="preserve"  transform="matrix(1 0 0 1.04 0 -7.560)">Tools</text>
<path d="M575,180 L580,184.5 L585,180" fill="none" stroke="#f0f0f0" stroke-width="1.5"/>
<rect x="597" y="162" width="119" height="40" rx="4" fill="#737373" />
<text x="609" y="189" font-family="Liberation Mono" font-size="20" fill="#ffffff" text-anchor="start" xml:space="preserve"  transform="matrix(1 0 0 1.04 0 -7.560)">Measure</text>
<path d="M698,180 L703,184.5 L708,180" fill="none" stroke="#f0f0f0" stroke-width="1.5"/>
<rect x="720" y="162" width="95" height="40" rx="4" fill="#737373" />
<text x="732" y="189" font-family="Liberation Mono" font-size="20" fill="#ffffff" text-anchor="start" xml:space="preserve"  transform="matrix(1 0 0 1.04 0 -7.560)">Specs</text>
<path d="M797,180 L802,184.5 L807,180" fill="none" stroke="#f0f0f0" stroke-width="1.5"/>
<path d="M1229.5,132.5 L1226.5,132.5 Q1222.5,132.5 1222.5,136.5 L1222.5,203.5 Q1222.5,207.5 1226.5,207.5 L1783.5,207.5 Q1787.5,207.5 1787.5,203.5 L1787.5,136.5 Q1787.5,132.5 1783.5,132.5 L1315.5,132.5" fill="none" stroke="#757575" stroke-width="1"/>
<text x="1230.5" y="139.0" font-family="Liberation Mono" font-size="20" fill="#d68a3e" text-anchor="start" xml:space="preserve"  transform="matrix(1 0 0 1.04 0 -5.560)">Actions</text>
<rect x="1227" y="152" width="56" height="48" rx="4" fill="#737373" />
<g transform="translate(1239.0,160.0)">
<rect x="12.6" y="2.1" width="6.6" height="9.6" fill="#ffffff"/><path d="M7.9,11.4 H24.2 L16,19.3 Z" fill="#ffffff"/><path d="M4.2,18.3 H11 L16,23 L21,18.3 H28 Q29.2,18.3 29.2,19.5 V25 Q29.2,26.2 28,26.2 H4.2 Q2.9,26.2 2.9,25 V19.5 Q2.9,18.3 4.2,18.3 Z" fill="#ffffff"/><circle cx="21" cy="23.1" r="1" fill="#737373"/><circle cx="25.6" cy="23.1" r="1" fill="#737373"/>
</g>
<rect x="1287" y="152" width="56" height="48" rx="4" fill="#737373" />
<g transform="translate(1299.0,160.0)">
<path d="M15.8,3.2 L24.2,12.4 H8.2 Z" fill="#ffffff"/><rect x="12.8" y="12" width="6.4" height="8.2" fill="#ffffff"/><rect x="2.8" y="19.9" width="26.3" height="8.3" rx="1.2" fill="#ffffff"/><circle cx="21" cy="25" r="1" fill="#737373"/><circle cx="25.6" cy="25" r="1" fill="#737373"/>
</g>
<rect x="1347" y="152" width="56" height="48" rx="4" fill="#737373" />
<g transform="translate(1359.0,160.0)">
<path d="M2,4.1 H30 Q32.3,4.1 32.3,6.3 V28.2 H23 V26.8 H19.6 V28.2 H12.6 V26.8 H9.2 V28.2 H-0.1 V6.3 Q-0.1,4.1 2,4.1 Z" fill="#ffffff"/><circle cx="9.8" cy="10.9" r="2.9" fill="#737373"/><path d="M4.2,21.6 V18.5 Q4.2,15.5 7.5,15.2 Q9.8,16.6 12.1,15.2 Q15.5,15.5 15.5,18.5 V21.6 Z" fill="#737373"/><path d="M18.2,10.7 H28.1 M18.2,14.2 H28.1 M18.2,17.9 H28.1" stroke="#737373" stroke-width="1.6"/>
</g>
<rect x="1407" y="152" width="56" height="48" rx="4" fill="#737373" />
<g transform="translate(1419.0,160.0)">
<path d="M6.5,6.5 L25.5,25.5 M25.5,6.5 L6.5,25.5" stroke="#ffffff" stroke-width="3"/><path d="M3.9,4.1 H12.5 L3.9,12.7 Z M28,4.1 H19.5 L28,12.7 Z M3.9,28.2 H12.5 L3.9,19.6 Z M28,28.2 H19.5 L28,19.6 Z" fill="#ffffff"/>
</g>
<rect x="1467" y="152" width="56" height="48" rx="4" fill="#737373" />
<g transform="translate(1479.0,160.0)">
<path d="M11.6,14.5 V5.3 Q11.6,3 14,3 Q16.4,3 16.4,5.3 V10.4 L24.2,11.6 Q26.6,12.2 26.6,14.8 L25,23.8 M13.3,23.8 Q12,20.6 7,17.6 Q4.6,16.4 5.1,14.4 Q6,12.3 8.6,13 L11.6,14.4" fill="none" stroke="#000" stroke-width="1.9" stroke-linejoin="round"/><rect x="12.2" y="23.8" width="13.6" height="6" rx="1.2" fill="#000"/><rect x="22.2" y="26.2" width="1.6" height="1.6" fill="#737373"/>
</g>
<rect x="1527.5" y="156.5" width="255.0" height="39.0" rx="4" fill="none" stroke="#757575" stroke-width="1"/>
<text x="1655" y="183" font-family="Liberation Mono" font-size="20" fill="#ffffff" text-anchor="middle" xml:space="preserve"  transform="matrix(1 0 0 1.04 0 -7.320)">do nothing</text>
<path d="M1797.5,132.5 L1794.5,132.5 Q1790.5,132.5 1790.5,136.5 L1790.5,203.5 Q1790.5,207.5 1794.5,207.5 L1911.5,207.5 Q1915.5,207.5 1915.5,203.5 L1915.5,136.5 Q1915.5,132.5 1911.5,132.5 L1847.5,132.5" fill="none" stroke="#757575" stroke-width="1"/>
<text x="1798.5" y="139.0" font-family="Liberation Mono" font-size="20" fill="#d68a3e" text-anchor="start" xml:space="preserve"  transform="matrix(1 0 0 1.04 0 -5.560)">Memo</text>
<rect x="1795" y="152" width="56" height="48" rx="4" fill="#737373" />
<g transform="translate(1807.0,160.0)">
<rect x="12.6" y="2.1" width="6.6" height="9.6" fill="#ffffff"/><path d="M7.9,11.4 H24.2 L16,19.3 Z" fill="#ffffff"/><path d="M4.2,18.3 H11 L16,23 L21,18.3 H28 Q29.2,18.3 29.2,19.5 V25 Q29.2,26.2 28,26.2 H4.2 Q2.9,26.2 2.9,25 V19.5 Q2.9,18.3 4.2,18.3 Z" fill="#ffffff"/><circle cx="21" cy="23.1" r="1" fill="#737373"/><circle cx="25.6" cy="23.1" r="1" fill="#737373"/>
</g>
<rect x="1855" y="152" width="56" height="48" rx="4" fill="#737373" />
<g transform="translate(1867.0,160.0)">
<path d="M15.8,3.2 L24.2,12.4 H8.2 Z" fill="#ffffff"/><rect x="12.8" y="12" width="6.4" height="8.2" fill="#ffffff"/><rect x="2.8" y="19.9" width="26.3" height="8.3" rx="1.2" fill="#ffffff"/><circle cx="21" cy="25" r="1" fill="#737373"/><circle cx="25.6" cy="25" r="1" fill="#737373"/>
</g>
<path d="M11.5,227.5 L8.5,227.5 Q4.5,227.5 4.5,231.5 L4.5,860.5 Q4.5,864.5 8.5,864.5 L419.5,864.5 Q423.5,864.5 423.5,860.5 L423.5,231.5 Q423.5,227.5 419.5,227.5 L157.5,227.5" fill="none" stroke="#757575" stroke-width="1"/>
<text x="12.5" y="234.0" font-family="Liberation Mono" font-size="20" fill="#d68a3e" text-anchor="start" xml:space="preserve"  transform="matrix(1 0 0 1.04 0 -9.360)">Measurements</text>
<rect x="8.5" y="243.5" width="399.0" height="605.0" rx="4" fill="none" stroke="#757575" stroke-width="1"/>
<rect x="13" y="248" width="390" height="25" rx="0" fill="#7a7a7a" />
<text x="172" y="266.5" font-family="Liberation Mono" font-size="18" fill="#ffffff" text-anchor="middle" xml:space="preserve"  transform="matrix(1 0 0 1.04 0 -10.660)">Measurement</text>
<text x="368" y="266.5" font-family="Liberation Mono" font-size="18" fill="#ffffff" text-anchor="middle" xml:space="preserve"  transform="matrix(1 0 0 1.04 0 -10.660)">size</text>
<path d="M25.5,283 L29.5,287.5 L25.5,292" fill="none" stroke="#f0f0f0" stroke-width="1.6"/>
<text x="53" y="294" font-family="Liberation Mono" font-size="18" fill="#ffffff" text-anchor="start" xml:space="preserve"  transform="matrix(1 0 0 1.04 0 -11.760)">spreadsheets</text>
<text x="368" y="294" font-family="Liberation Mono" font-size="18" fill="#ffffff" text-anchor="middle" xml:space="preserve"  transform="matrix(1 0 0 1.04 0 -11.760)">0</text>
<rect x="366.29" y="285.67" width="3.42" height="3.74" fill="#333333"/>
<path d="M25.5,313 L29.5,317.5 L25.5,322" fill="none" stroke="#f0f0f0" stroke-width="1.6"/>
<text x="53" y="324" font-family="Liberation Mono" font-size="18" fill="#ffffff" text-anchor="start" xml:space="preserve"  transform="matrix(1 0 0 1.04 0 -12.960)">plots</text>
<text x="368" y="324" font-family="Liberation Mono" font-size="18" fill="#ffffff" text-anchor="middle" xml:space="preserve"  transform="matrix(1 0 0 1.04 0 -12.960)">5</text>
<path d="M25.5,343 L29.5,347.5 L25.5,352" fill="none" stroke="#f0f0f0" stroke-width="1.6"/>
<text x="53" y="354" font-family="Liberation Mono" font-size="18" fill="#ffffff" text-anchor="start" xml:space="preserve"  transform="matrix(1 0 0 1.04 0 -14.160)">computations</text>
<text x="368" y="354" font-family="Liberation Mono" font-size="18" fill="#ffffff" text-anchor="middle" xml:space="preserve"  transform="matrix(1 0 0 1.04 0 -14.160)">0</text>
<rect x="366.29" y="345.67" width="3.42" height="3.74" fill="#333333"/>
<path d="M25.5,373 L29.5,377.5 L25.5,382" fill="none" stroke="#f0f0f0" stroke-width="1.6"/>
<text x="53" y="384" font-family="Liberation Mono" font-size="18" fill="#ffffff" text-anchor="start" xml:space="preserve"  transform="matrix(1 0 0 1.04 0 -15.360)">measurements</text>
<text x="368" y="384" font-family="Liberation Mono" font-size="18" fill="#ffffff" text-anchor="middle" xml:space="preserve"  transform="matrix(1 0 0 1.04 0 -15.360)">0</text>
<rect x="366.29" y="375.67" width="3.42" height="3.74" fill="#333333"/>
<rect x="412" y="243" width="6" height="606" rx="0" fill="#7a7a7a" />
<rect x="8" y="853" width="412" height="6" rx="0" fill="#7a7a7a" />
<path d="M12,885.5 L8.5,885.5 Q4.5,885.5 4.5,889.5 L4.5,944.5 Q4.5,948.5 8.5,948.5 L419.5,948.5 Q423.5,948.5 423.5,944.5 L423.5,889.5 Q423.5,885.5 419.5,885.5 L154,885.5" fill="none" stroke="#757575" stroke-width="1"/>
<rect x="16.5" y="875.5" width="19" height="19" rx="3" fill="none" stroke="#757575" stroke-width="1"/>
<text x="43" y="892" font-family="Liberation Mono" font-size="20" fill="#ffffff" text-anchor="start" xml:space="preserve"  transform="matrix(1 0 0 1.04 0 -35.680)">Show both</text>
<rect x="12" y="915" width="20" height="20" rx="3" fill="#737373"/>
<path d="M16.5,925.5 L20.5,929.5 L27.5,921.5" fill="none" stroke="#3a3a3a" stroke-width="1.6"/>
<text x="38" y="932" font-family="Liberation Mono" font-size="20" fill="#a8a8a8" text-anchor="start" xml:space="preserve"  transform="matrix(1 0 0 1.04 0 -37.280)">viewer on</text>
<rect x="156.5" y="915.5" width="19" height="19" rx="3" fill="none" stroke="#757575" stroke-width="1"/>
<text x="183" y="932" font-family="Liberation Mono" font-size="20" fill="#ffffff" text-anchor="start" xml:space="preserve"  transform="matrix(1 0 0 1.04 0 -37.280)">zoom area</text>
<path d="M430.5,242 V946.5 Q430.5,950.5 434.5,950.5 H761.5 Q765.5,950.5 765.5,946.5 V246.5 Q765.5,242.5 761.5,242.5 H740" fill="none" stroke="#757575" stroke-width="1"/>
<path d="M430,243 V217 Q430,213 434,213 H524 V243 Z" fill="#737373"/>
<path d="M524,243 V213 H636 Q640,213 640,217 V243 Z" fill="#0080ff"/>
<path d="M640,243 V217 Q640,213 644,213 H752 Q756,213 756,217 V243 Z" fill="#737373"/>
<path d="M430,242.5 H756" stroke="#7b7b7b" stroke-width="1"/>
<text x="477" y="234" font-family="Liberation Mono" font-size="18" fill="#ffffff" text-anchor="middle" xml:space="preserve"  transform="matrix(1 0 0 1.04 0 -9.360)">Main</text>
<text x="582" y="234" font-family="Liberation Mono" font-size="18" fill="#ffffff" text-anchor="middle" xml:space="preserve"  transform="matrix(1 0 0 1.04 0 -9.360)">Viewer</text>
<text x="698" y="234" font-family="Liberation Mono" font-size="18" fill="#ffffff" text-anchor="middle" xml:space="preserve"  transform="matrix(1 0 0 1.04 0 -9.360)">Params</text>
<path d="M444,265.5 L441.5,265.5 Q437.5,265.5 437.5,269.5 L437.5,370.5 Q437.5,374.5 441.5,374.5 L754.5,374.5 Q758.5,374.5 758.5,370.5 L758.5,269.5 Q758.5,265.5 754.5,265.5 L610,265.5" fill="none" stroke="#757575" stroke-width="1"/>
<circle cx="459" cy="265" r="9.5" fill="none" stroke="#757575" stroke-width="1"/>
<text x="475" y="272" font-family="Liberation Mono" font-size="20" fill="#ffffff" text-anchor="start" xml:space="preserve"  transform="matrix(1 0 0 1.04 0 -10.880)">Crosshair 0</text>
<rect x="599.10" y="262.74" width="3.80" height="4.16" fill="#333333"/>
<text x="447" y="313" font-family="Liberation Mono" font-size="20" fill="#ffffff" text-anchor="start" xml:space="preserve"  transform="matrix(1 0 0 1.04 0 -12.520)">abscissa :</text>
<text x="447" y="357" font-family="Liberation Mono" font-size="20" fill="#ffffff" text-anchor="start" xml:space="preserve"  transform="matrix(1 0 0 1.04 0 -14.280)">ordinate :</text>
<rect x="588.5" y="286.5" width="165.0" height="39.0" rx="4" fill="none" stroke="#757575" stroke-width="1"/>
<rect x="588.5" y="330.5" width="165.0" height="39.0" rx="4" fill="none" stroke="#757575" stroke-width="1"/>
<path d="M444,395.5 L441.5,395.5 Q437.5,395.5 437.5,399.5 L437.5,500.5 Q437.5,504.5 441.5,504.5 L754.5,504.5 Q758.5,504.5 758.5,500.5 L758.5,399.5 Q758.5,395.5 754.5,395.5 L610,395.5" fill="none" stroke="#757575" stroke-width="1"/>
<circle cx="459" cy="395" r="9.5" fill="none" stroke="#757575" stroke-width="1"/>
<text x="475" y="402" font-family="Liberation Mono" font-size="20" fill="#ffffff" text-anchor="start" xml:space="preserve"  transform="matrix(1 0 0 1.04 0 -16.080)">Crosshair 1</text>
<text x="447" y="443" font-family="Liberation Mono" font-size="20" fill="#ffffff" text-anchor="start" xml:space="preserve"  transform="matrix(1 0 0 1.04 0 -17.720)">abscissa :</text>
<text x="447" y="487" font-family="Liberation Mono" font-size="20" fill="#ffffff" text-anchor="start" xml:space="preserve"  transform="matrix(1 0 0 1.04 0 -19.480)">ordinate :</text>
<rect x="588.5" y="416.5" width="165.0" height="39.0" rx="4" fill="none" stroke="#757575" stroke-width="1"/>
<rect x="588.5" y="460.5" width="165.0" height="39.0" rx="4" fill="none" stroke="#757575" stroke-width="1"/>
<path d="M444,525.5 L441.5,525.5 Q437.5,525.5 437.5,529.5 L437.5,630.5 Q437.5,634.5 441.5,634.5 L754.5,634.5 Q758.5,634.5 758.5,630.5 L758.5,529.5 Q758.5,525.5 754.5,525.5 L610,525.5" fill="none" stroke="#757575" stroke-width="1"/>
<circle cx="459" cy="525" r="9.5" fill="none" stroke="#757575" stroke-width="1"/>
<text x="475" y="532" font-family="Liberation Mono" font-size="20" fill="#ffffff" text-anchor="start" xml:space="preserve"  transform="matrix(1 0 0 1.04 0 -21.280)">Crosshair 2</text>
<text x="447" y="573" font-family="Liberation Mono" font-size="20" fill="#ffffff" text-anchor="start" xml:space="preserve"  transform="matrix(1 0 0 1.04 0 -22.920)">abscissa :</text>
<text x="447" y="617" font-family="Liberation Mono" font-size="20" fill="#ffffff" text-anchor="start" xml:space="preserve"  transform="matrix(1 0 0 1.04 0 -24.680)">ordinate :</text>
<rect x="588.5" y="546.5" width="165.0" height="39.0" rx="4" fill="none" stroke="#757575" stroke-width="1"/>
<rect x="588.5" y="590.5" width="165.0" height="39.0" rx="4" fill="none" stroke="#757575" stroke-width="1"/>
<path d="M444,655.5 L441.5,655.5 Q437.5,655.5 437.5,659.5 L437.5,760.5 Q437.5,764.5 441.5,764.5 L754.5,764.5 Q758.5,764.5 758.5,760.5 L758.5,659.5 Q758.5,655.5 754.5,655.5 L610,655.5" fill="none" stroke="#757575" stroke-width="1"/>
<circle cx="459" cy="655" r="9.5" fill="none" stroke="#757575" stroke-width="1"/>
<text x="475" y="662" font-family="Liberation Mono" font-size="20" fill="#ffffff" text-anchor="start" xml:space="preserve"  transform="matrix(1 0 0 1.04 0 -26.480)">Crosshair 3</text>
<text x="447" y="703" font-family="Liberation Mono" font-size="20" fill="#ffffff" text-anchor="start" xml:space="preserve"  transform="matrix(1 0 0 1.04 0 -28.120)">abscissa :</text>
<text x="447" y="747" font-family="Liberation Mono" font-size="20" fill="#ffffff" text-anchor="start" xml:space="preserve"  transform="matrix(1 0 0 1.04 0 -29.880)">ordinate :</text>
<rect x="588.5" y="676.5" width="165.0" height="39.0" rx="4" fill="none" stroke="#757575" stroke-width="1"/>
<rect x="588.5" y="720.5" width="165.0" height="39.0" rx="4" fill="none" stroke="#757575" stroke-width="1"/>
<path d="M444,785.5 L441.5,785.5 Q437.5,785.5 437.5,789.5 L437.5,844.5 Q437.5,848.5 441.5,848.5 L754.5,848.5 Q758.5,848.5 758.5,844.5 L758.5,789.5 Q758.5,785.5 754.5,785.5 L647,785.5" fill="none" stroke="#757575" stroke-width="1"/>
<circle cx="459" cy="785" r="10" fill="#0080ff"/>
<circle cx="459" cy="785" r="3.7" fill="#333333"/>
<text x="475" y="792" font-family="Liberation Mono" font-size="20" fill="#ffffff" text-anchor="start" xml:space="preserve"  transform="matrix(1 0 0 1.04 0 -31.680)">No snap or ...</text>
<circle cx="455" cy="825" r="9.5" fill="none" stroke="#757575" stroke-width="1"/>
<text x="471" y="832" font-family="Liberation Mono" font-size="20" fill="#ffffff" text-anchor="start" xml:space="preserve"  transform="matrix(1 0 0 1.04 0 -33.280)">grid</text>
<circle cx="539" cy="825" r="9.5" fill="none" stroke="#757575" stroke-width="1"/>
<text x="555" y="832" font-family="Liberation Mono" font-size="20" fill="#ffffff" text-anchor="start" xml:space="preserve"  transform="matrix(1 0 0 1.04 0 -33.280)">data</text>
<circle cx="623" cy="825" r="9.5" fill="none" stroke="#757575" stroke-width="1"/>
<text x="639" y="832" font-family="Liberation Mono" font-size="20" fill="#ffffff" text-anchor="start" xml:space="preserve"  transform="matrix(1 0 0 1.04 0 -33.280)">point</text>
<path d="M444.5,865.5 L441.5,865.5 Q437.5,865.5 437.5,869.5 L437.5,936.5 Q437.5,940.5 441.5,940.5 L754.5,940.5 Q758.5,940.5 758.5,936.5 L758.5,869.5 Q758.5,865.5 754.5,865.5 L626.5,865.5" fill="none" stroke="#757575" stroke-width="1"/>
<text x="445.5" y="872.0" font-family="Liberation Mono" font-size="20" fill="#d68a3e" text-anchor="start" xml:space="preserve"  transform="matrix(1 0 0 1.04 0 -34.880)">Crosshair tools</text>
<rect x="441" y="885" width="56" height="48" rx="4" fill="#737373" />
<g transform="translate(453.0,893.0)">
<path d="M2.6,16.8 C5.5,11.2 10.3,8.7 16,8.7 C21.7,8.7 26.5,11.2 29.4,16.8 C26.5,22.4 21.7,24.9 16,24.9 C10.3,24.9 5.5,22.4 2.6,16.8 Z" fill="none" stroke="#ffffff" stroke-width="2.3"/><circle cx="16.2" cy="16.2" r="6.8" fill="#ffffff"/><path d="M12.3,16 A4,4 0 0 1 16.3,12" fill="none" stroke="#737373" stroke-width="1.2"/>
</g>
<rect x="499" y="885" width="56" height="48" rx="4" fill="#737373" />
<g transform="translate(511.0,893.0)">
<path d="M2.6,16.8 C5.5,11.2 10.3,8.7 16,8.7 C21.7,8.7 26.5,11.2 29.4,16.8 C26.5,22.4 21.7,24.9 16,24.9 C10.3,24.9 5.5,22.4 2.6,16.8 Z" fill="none" stroke="#ffffff" stroke-width="2.3"/><path d="M16.5,9.6 A6.8,6.8 0 0 0 11.5,21" fill="none" stroke="#ffffff" stroke-width="3.2"/><path d="M22.5,16.5 A6.8,6.8 0 0 1 18,22.5" fill="none" stroke="#ffffff" stroke-width="1.6"/><path d="M12.3,15.5 A4,4 0 0 1 15,12.3" fill="none" stroke="#737373" stroke-width="1.1"/><path d="M22.2,6.2 L10,27.8" stroke="#737373" stroke-width="5"/><path d="M21.3,7.4 L10.9,26.4" stroke="#ffffff" stroke-width="2.5"/>
</g>
<rect x="557" y="885" width="56" height="48" rx="4" fill="#737373" />
<g transform="translate(569.0,893.0)">
<path d="M2.6,16.8 C5.5,11.2 10.3,8.7 16,8.7 C21.7,8.7 26.5,11.2 29.4,16.8 C26.5,22.4 21.7,24.9 16,24.9 C10.3,24.9 5.5,22.4 2.6,16.8 Z" fill="none" stroke="#ffffff" stroke-width="2.3"/><path d="M16.5,9.6 A6.8,6.8 0 0 1 22,20" fill="none" stroke="#ffffff" stroke-width="3.2"/><path d="M0,8 L10.5,4 L23,29 L0,29 Z" fill="#737373"/><path d="M2.6,16.8 C4,14 6,12 8.5,10.5" fill="none" stroke="#ffffff" stroke-width="2.3"/><path d="M4,13.5 L11,23.5 M7,11.5 L14,22.5 M10.5,10.5 L16.5,19.5" stroke="#ffffff" stroke-width="1.3"/><path d="M9.6,5 L23,28.6" stroke="#737373" stroke-width="4.4"/><path d="M10,5.2 L22.6,28" stroke="#ffffff" stroke-width="2.4"/>
</g>
<rect x="770" y="213" width="1142" height="728" rx="0" fill="#000000" />
<rect x="1914" y="213" width="6" height="728" rx="0" fill="#7a7a7a" />
<rect x="770" y="943" width="1142" height="6" rx="0" fill="#7a7a7a" />
<g shape-rendering="crispEdges">
<path d="M918,255.5 H1861" stroke="#ffffff" stroke-width="1" stroke-dasharray="3,3"/>
<path d="M918,414.5 H1861" stroke="#ffffff" stroke-width="1" stroke-dasharray="3,3"/>
<path d="M918,572.5 H1861" stroke="#ffffff" stroke-width="1" stroke-dasharray="3,3"/>
<path d="M918,731.5 H1861" stroke="#ffffff" stroke-width="1" stroke-dasharray="3,3"/>
<path d="M1389.5,256 V889" stroke="#ffffff" stroke-width="1" stroke-dasharray="3,3"/>
<path d="M1860.5,256 V889" stroke="#ffffff" stroke-width="1" stroke-dasharray="3,3"/>
</g>
<path d="M917.5,262 V889.5 H1853" stroke="#ffffff" stroke-width="1" fill="none"/>
<path d="M917.5,255 L913,265 L922,265 Z" fill="#ffffff"/>
<path d="M1861,889.5 L1851,885 L1851,894 Z" fill="#ffffff"/>
<path d="M914,255.5 H917 M914,287.2 H917 M914,318.9 H917 M914,350.6 H917 M914,382.3 H917 M914,414.0 H917 M914,445.7 H917 M914,477.4 H917 M914,509.1 H917 M914,540.8 H917 M914,572.5 H917 M914,604.2 H917 M914,635.9 H917 M914,667.6 H917 M914,699.3 H917 M914,731.0 H917 M914,762.7 H917 M914,794.4 H917 M914,826.1 H917 M914,857.8 H917 M914,889.5 H917 M917.5,889.5 V892.5 M1011.8,889.5 V892.5 M1106.1,889.5 V892.5 M1200.4,889.5 V892.5 M1294.7,889.5 V892.5 M1389.0,889.5 V892.5 M1483.3,889.5 V892.5 M1577.6,889.5 V892.5 M1671.9,889.5 V892.5 M1766.2,889.5 V892.5 M1860.5,889.5 V892.5" stroke="#ffffff" stroke-width="1" shape-rendering="crispEdges"/>
<text x="911" y="262" font-family="Liberation Mono" font-size="20" fill="#ffffff" text-anchor="end" xml:space="preserve"  transform="matrix(1 0 0 1.04 0 -10.480)">1.00</text>
<rect x="891.10" y="252.74" width="3.80" height="4.16" fill="#000000"/><rect x="903.10" y="252.74" width="3.80" height="4.16" fill="#000000"/>
<text x="911" y="420" font-family="Liberation Mono" font-size="20" fill="#ffffff" text-anchor="end" xml:space="preserve"  transform="matrix(1 0 0 1.04 0 -16.800)">0.50</text>
<rect x="867.10" y="410.74" width="3.80" height="4.16" fill="#000000"/><rect x="903.10" y="410.74" width="3.80" height="4.16" fill="#000000"/>
<text x="911" y="579" font-family="Liberation Mono" font-size="20" fill="#ffffff" text-anchor="end" xml:space="preserve"  transform="matrix(1 0 0 1.04 0 -23.160)">0.0</text>
<rect x="879.10" y="569.74" width="3.80" height="4.16" fill="#000000"/><rect x="903.10" y="569.74" width="3.80" height="4.16" fill="#000000"/>
<text x="911" y="738" font-family="Liberation Mono" font-size="20" fill="#ffffff" text-anchor="end" xml:space="preserve"  transform="matrix(1 0 0 1.04 0 -29.520)">-0.50</text>
<rect x="867.10" y="728.74" width="3.80" height="4.16" fill="#000000"/><rect x="903.10" y="728.74" width="3.80" height="4.16" fill="#000000"/>
<text x="911" y="896" font-family="Liberation Mono" font-size="20" fill="#ffffff" text-anchor="end" xml:space="preserve"  transform="matrix(1 0 0 1.04 0 -35.840)">-1.00</text>
<rect x="891.10" y="886.74" width="3.80" height="4.16" fill="#000000"/><rect x="903.10" y="886.74" width="3.80" height="4.16" fill="#000000"/>
<text x="917.5" y="913" font-family="Liberation Mono" font-size="20" fill="#ffffff" text-anchor="middle" xml:space="preserve"  transform="matrix(1 0 0 1.04 0 -36.520)">-0.50</text>
<rect x="903.60" y="903.74" width="3.80" height="4.16" fill="#000000"/><rect x="939.60" y="903.74" width="3.80" height="4.16" fill="#000000"/>
<text x="1389.5" y="913" font-family="Liberation Mono" font-size="20" fill="#ffffff" text-anchor="middle" xml:space="preserve"  transform="matrix(1 0 0 1.04 0 -36.520)">0.0</text>
<rect x="1375.60" y="903.74" width="3.80" height="4.16" fill="#000000"/><rect x="1399.60" y="903.74" width="3.80" height="4.16" fill="#000000"/>
<text x="1860.5" y="913" font-family="Liberation Mono" font-size="20" fill="#ffffff" text-anchor="middle" xml:space="preserve"  transform="matrix(1 0 0 1.04 0 -36.520)">0.50</text>
<rect x="1840.60" y="903.74" width="3.80" height="4.16" fill="#000000"/><rect x="1876.60" y="903.74" width="3.80" height="4.16" fill="#000000"/>
<text x="1341" y="235" font-family="Liberation Mono" font-size="20" fill="#ffffff" text-anchor="middle" xml:space="preserve"  transform="matrix(1 0 0 1.04 0 -9.400)">At X demo</text>
<text x="1388" y="933" font-family="Liberation Mono" font-size="20" fill="#ffffff" text-anchor="middle" xml:space="preserve"  transform="matrix(1 0 0 1.04 0 -37.320)">x , unit : unknown</text>
<g transform="translate(806,572) rotate(-90)">
<text x="0" y="0" font-family="Liberation Mono" font-size="20" fill="#ffffff" text-anchor="middle" xml:space="preserve"  transform="matrix(1 0 0 1.04 0 -0.000)">F(0) and others , unit : unknown</text>
<rect x="-163.90" y="-9.26" width="3.80" height="4.16" fill="#000000"/>
</g>
<g shape-rendering="crispEdges" fill="none" stroke-width="1">
<path d="M917.5,572.5 L1670.5,386.5" stroke="#87ceeb"/>
<path d="M917.5,572.5 L1670.5,388.8" stroke="#d3d3d3"/>
<path d="M917.5,572.5 L1670.5,406.8" stroke="#ffa500"/>
<path d="M917.5,572.5 L1670.5,422.0" stroke="#ff00ff"/>
<path d="M917.5,572.5 L1670.5,441.0" stroke="#cd5c5c"/>
<path d="M917.5,572.5 L1670.5,463.2" stroke="#008000"/>
<path d="M917.5,572.5 L1670.5,488.1" stroke="#ff0000"/>
<path d="M917.5,572.5 L1670.5,515.0" stroke="#87ceeb"/>
<path d="M917.5,572.5 L1670.5,543.4" stroke="#d3d3d3"/>
<path d="M917.5,572.5 L1670.5,601.6" stroke="#ffa500"/>
<path d="M917.5,572.5 L1670.5,630.0" stroke="#ff00ff"/>
<path d="M917.5,572.5 L1670.5,656.9" stroke="#cd5c5c"/>
<path d="M917.5,572.5 L1670.5,681.8" stroke="#008000"/>
<path d="M917.5,572.5 L1670.5,704.0" stroke="#ff0000"/>
<path d="M917.5,572.5 L1670.5,723.0" stroke="#87ceeb"/>
<path d="M917.5,572.5 L1670.5,738.2" stroke="#d3d3d3"/>
<path d="M917.5,572.5 L1670.5,756.2" stroke="#ffa500"/>
<path d="M917.5,572.5 L1670.5,758.5" stroke="#ff00ff"/>
</g>
<path d="M1759.5,941 V265.5 H1850.5 V941" fill="#000000" stroke="#ffffff" stroke-width="1"/>
<rect x="1763" y="277" width="14" height="5" rx="0" fill="#ff00ff" />
<text x="1787" y="286" font-family="Liberation Mono" font-size="20" fill="#ffffff" text-anchor="start" xml:space="preserve"  transform="matrix(1 0 0 1.04 0 -11.440)">F(0)</text>
<rect x="1815.10" y="276.74" width="3.80" height="4.16" fill="#000000"/>
<rect x="1763" y="301" width="14" height="5" rx="0" fill="#cd5c5c" />
<text x="1787" y="310" font-family="Liberation Mono" font-size="20" fill="#ffffff" text-anchor="start" xml:space="preserve"  transform="matrix(1 0 0 1.04 0 -12.400)">F(1)</text>
<rect x="1763" y="325" width="14" height="5" rx="0" fill="#008000" />
<text x="1787" y="334" font-family="Liberation Mono" font-size="20" fill="#ffffff" text-anchor="start" xml:space="preserve"  transform="matrix(1 0 0 1.04 0 -13.360)">F(2)</text>
<rect x="1763" y="349" width="14" height="5" rx="0" fill="#ff0000" />
<text x="1787" y="358" font-family="Liberation Mono" font-size="20" fill="#ffffff" text-anchor="start" xml:space="preserve"  transform="matrix(1 0 0 1.04 0 -14.320)">F(3)</text>
<rect x="1763" y="373" width="14" height="5" rx="0" fill="#87ceeb" />
<text x="1787" y="382" font-family="Liberation Mono" font-size="20" fill="#ffffff" text-anchor="start" xml:space="preserve"  transform="matrix(1 0 0 1.04 0 -15.280)">F(4)</text>
<rect x="1763" y="397" width="14" height="5" rx="0" fill="#d3d3d3" />
<text x="1787" y="406" font-family="Liberation Mono" font-size="20" fill="#ffffff" text-anchor="start" xml:space="preserve"  transform="matrix(1 0 0 1.04 0 -16.240)">F(5)</text>
<text x="1787" y="430" font-family="Liberation Mono" font-size="20" fill="#ffffff" text-anchor="start" xml:space="preserve"  transform="matrix(1 0 0 1.04 0 -17.200)">F(6)</text>
<rect x="1763" y="445" width="14" height="5" rx="0" fill="#ffa500" />
<text x="1787" y="454" font-family="Liberation Mono" font-size="20" fill="#ffffff" text-anchor="start" xml:space="preserve"  transform="matrix(1 0 0 1.04 0 -18.160)">F(7)</text>
<rect x="1763" y="469" width="14" height="5" rx="0" fill="#ff00ff" />
<text x="1787" y="478" font-family="Liberation Mono" font-size="20" fill="#ffffff" text-anchor="start" xml:space="preserve"  transform="matrix(1 0 0 1.04 0 -19.120)">F(8)</text>
<rect x="1763" y="493" width="14" height="5" rx="0" fill="#cd5c5c" />
<text x="1787" y="502" font-family="Liberation Mono" font-size="20" fill="#ffffff" text-anchor="start" xml:space="preserve"  transform="matrix(1 0 0 1.04 0 -20.080)">F(9)</text>
<rect x="1763" y="517" width="14" height="5" rx="0" fill="#008000" />
<text x="1787" y="526" font-family="Liberation Mono" font-size="20" fill="#ffffff" text-anchor="start" xml:space="preserve"  transform="matrix(1 0 0 1.04 0 -21.040)">F(10)</text>
<rect x="1827.10" y="516.74" width="3.80" height="4.16" fill="#000000"/>
<rect x="1763" y="541" width="14" height="5" rx="0" fill="#ff0000" />
<text x="1787" y="550" font-family="Liberation Mono" font-size="20" fill="#ffffff" text-anchor="start" xml:space="preserve"  transform="matrix(1 0 0 1.04 0 -22.000)">F(11)</text>
<rect x="1763" y="565" width="14" height="5" rx="0" fill="#87ceeb" />
<text x="1787" y="574" font-family="Liberation Mono" font-size="20" fill="#ffffff" text-anchor="start" xml:space="preserve"  transform="matrix(1 0 0 1.04 0 -22.960)">F(12)</text>
<rect x="1763" y="589" width="14" height="5" rx="0" fill="#d3d3d3" />
<text x="1787" y="598" font-family="Liberation Mono" font-size="20" fill="#ffffff" text-anchor="start" xml:space="preserve"  transform="matrix(1 0 0 1.04 0 -23.920)">F(13)</text>
<text x="1787" y="622" font-family="Liberation Mono" font-size="20" fill="#ffffff" text-anchor="start" xml:space="preserve"  transform="matrix(1 0 0 1.04 0 -24.880)">F(14)</text>
<rect x="1763" y="637" width="14" height="5" rx="0" fill="#ffa500" />
<text x="1787" y="646" font-family="Liberation Mono" font-size="20" fill="#ffffff" text-anchor="start" xml:space="preserve"  transform="matrix(1 0 0 1.04 0 -25.840)">F(15)</text>
<rect x="1763" y="661" width="14" height="5" rx="0" fill="#ff00ff" />
<text x="1787" y="670" font-family="Liberation Mono" font-size="20" fill="#ffffff" text-anchor="start" xml:space="preserve"  transform="matrix(1 0 0 1.04 0 -26.800)">F(16)</text>
<rect x="1763" y="685" width="14" height="5" rx="0" fill="#cd5c5c" />
<text x="1787" y="694" font-family="Liberation Mono" font-size="20" fill="#ffffff" text-anchor="start" xml:space="preserve"  transform="matrix(1 0 0 1.04 0 -27.760)">F(17)</text>
<rect x="1763" y="709" width="14" height="5" rx="0" fill="#008000" />
<text x="1787" y="718" font-family="Liberation Mono" font-size="20" fill="#ffffff" text-anchor="start" xml:space="preserve"  transform="matrix(1 0 0 1.04 0 -28.720)">F(18)</text>
<rect x="1763" y="733" width="14" height="5" rx="0" fill="#ff0000" />
<text x="1787" y="742" font-family="Liberation Mono" font-size="20" fill="#ffffff" text-anchor="start" xml:space="preserve"  transform="matrix(1 0 0 1.04 0 -29.680)">F(19)</text>
<rect x="1763" y="757" width="14" height="5" rx="0" fill="#87ceeb" />
<text x="1787" y="766" font-family="Liberation Mono" font-size="20" fill="#ffffff" text-anchor="start" xml:space="preserve"  transform="matrix(1 0 0 1.04 0 -30.640)">F(20)</text>
<rect x="1827.10" y="756.74" width="3.80" height="4.16" fill="#000000"/>
<rect x="1763" y="781" width="14" height="5" rx="0" fill="#d3d3d3" />
<text x="1787" y="790" font-family="Liberation Mono" font-size="20" fill="#ffffff" text-anchor="start" xml:space="preserve"  transform="matrix(1 0 0 1.04 0 -31.600)">F(21)</text>
<text x="1787" y="814" font-family="Liberation Mono" font-size="20" fill="#ffffff" text-anchor="start" xml:space="preserve"  transform="matrix(1 0 0 1.04 0 -32.560)">F(22)</text>
<rect x="1763" y="829" width="14" height="5" rx="0" fill="#ffa500" />
<text x="1787" y="838" font-family="Liberation Mono" font-size="20" fill="#ffffff" text-anchor="start" xml:space="preserve"  transform="matrix(1 0 0 1.04 0 -33.520)">F(23)</text>
<rect x="1763" y="853" width="14" height="5" rx="0" fill="#ff00ff" />
<text x="1787" y="862" font-family="Liberation Mono" font-size="20" fill="#ffffff" text-anchor="start" xml:space="preserve"  transform="matrix(1 0 0 1.04 0 -34.480)">F(24)</text>
<rect x="1763" y="877" width="14" height="5" rx="0" fill="#cd5c5c" />
<text x="1787" y="886" font-family="Liberation Mono" font-size="20" fill="#ffffff" text-anchor="start" xml:space="preserve"  transform="matrix(1 0 0 1.04 0 -35.440)">F(25)</text>
<rect x="1763" y="901" width="14" height="5" rx="0" fill="#008000" />
<text x="1787" y="910" font-family="Liberation Mono" font-size="20" fill="#ffffff" text-anchor="start" xml:space="preserve"  transform="matrix(1 0 0 1.04 0 -36.400)">F(26)</text>
<rect x="1763" y="925" width="14" height="5" rx="0" fill="#ff0000" />
<text x="1787" y="934" font-family="Liberation Mono" font-size="20" fill="#ffffff" text-anchor="start" xml:space="preserve"  transform="matrix(1 0 0 1.04 0 -37.360)">F(27)</text>
<path d="M11.5,965.5 L8.5,965.5 Q4.5,965.5 4.5,969.5 L4.5,1028.5 Q4.5,1032.5 8.5,1032.5 L1915.5,1032.5 Q1919.5,1032.5 1919.5,1028.5 L1919.5,969.5 Q1919.5,965.5 1915.5,965.5 L85.5,965.5" fill="none" stroke="#757575" stroke-width="1"/>
<text x="12.5" y="972.0" font-family="Liberation Mono" font-size="20" fill="#d68a3e" text-anchor="start" xml:space="preserve"  transform="matrix(1 0 0 1.04 0 -38.880)">Export</text>
<text x="12" y="1012" font-family="Liberation Mono" font-size="20" fill="#ffffff" text-anchor="start" xml:space="preserve"  transform="matrix(1 0 0 1.04 0 -40.480)">directory</text>
<rect x="125.5" y="985.5" width="659.0" height="39.0" rx="4" fill="none" stroke="#757575" stroke-width="1"/>
<text x="134" y="1012" font-family="Liberation Mono" font-size="20" fill="#ffffff" text-anchor="start" xml:space="preserve"  transform="matrix(1 0 0 1.04 0 -40.480)">C:/tclsoft/tkfab/csv</text>
<text x="792" y="1012" font-family="Liberation Mono" font-size="20" fill="#ffffff" text-anchor="start" xml:space="preserve"  transform="matrix(1 0 0 1.04 0 -40.480)">reset name</text>
<rect x="917" y="986" width="46" height="38" rx="4" fill="#737373" />
<g transform="translate(924.0,989.0)">
<path d="M10,11 L21.5,22.5 M21.5,11 L10,22.5" stroke="#ffffff" stroke-width="4"/>
</g>
<text x="969" y="1012" font-family="Liberation Mono" font-size="20" fill="#ffffff" text-anchor="start" xml:space="preserve"  transform="matrix(1 0 0 1.04 0 -40.480)">name</text>
<rect x="1023.5" y="985.5" width="659.0" height="39.0" rx="4" fill="none" stroke="#757575" stroke-width="1"/>
<text x="1352.5" y="1012" font-family="Liberation Mono" font-size="20" fill="#ffffff" text-anchor="middle" xml:space="preserve"  transform="matrix(1 0 0 1.04 0 -40.480)">export_meas0_viewer</text>
<rect x="1374.60" y="1002.74" width="3.80" height="4.16" fill="#333333"/>
<text x="1689" y="1012" font-family="Liberation Mono" font-size="20" fill="#ffffff" text-anchor="start" xml:space="preserve"  transform="matrix(1 0 0 1.04 0 -40.480)">extension</text>
<rect x="1803.5" y="985.5" width="111.0" height="39.0" rx="4" fill="none" stroke="#757575" stroke-width="1"/>
<text x="1859" y="1012" font-family="Liberation Mono" font-size="20" fill="#ffffff" text-anchor="middle" xml:space="preserve"  transform="matrix(1 0 0 1.04 0 -40.480)">png</text>
<rect x="8" y="1039" width="56" height="48" rx="4" fill="#737373" />
<g transform="translate(20.0,1047.0)">
<path d="M5,3.6 L26.2,15.5 L5,27.4 Z" fill="#ffffff"/><rect x="0" y="0" width="32" height="32" fill="url(#stip)"/>
</g>
<rect x="67" y="1040" width="1231" height="46" fill="none" stroke="#aaa59b" stroke-width="2"/>
<text x="682" y="1069" font-family="Liberation Mono" font-size="20" fill="#ffffff" text-anchor="middle" xml:space="preserve"  transform="matrix(1 0 0 1.04 0 -42.760)">....</text>
<rect x="1301" y="1039" width="56" height="48" rx="4" fill="#737373" />
<g transform="translate(1313.0,1047.0)">
<defs><radialGradient id="ledg" cx="0.5" cy="0.92" r="0.75"><stop offset="0" stop-color="#99ff66"/><stop offset="0.55" stop-color="#33bb22"/><stop offset="1" stop-color="#009900"/></radialGradient><linearGradient id="ledh" x1="0" y1="0" x2="0" y2="1"><stop offset="0" stop-color="#ffffff"/><stop offset="1" stop-color="#ffffff" stop-opacity="0.35"/></linearGradient></defs><circle cx="16" cy="16" r="13.4" fill="url(#ledg)" stroke="#0b3a33" stroke-width="1.3"/><ellipse cx="16" cy="10.6" rx="9.6" ry="5.8" fill="url(#ledh)"/>
</g>
<text x="1364" y="1070" font-family="Liberation Sans" font-size="19" fill="#ffffff" textLength="22" lengthAdjust="spacingAndGlyphs">17</text>
<text x="1399.5" y="1070" font-family="Liberation Sans" font-size="19" fill="#ffffff" textLength="36" lengthAdjust="spacingAndGlyphs">Feb</text>
<text x="1447.5" y="1070" font-family="Liberation Sans" font-size="19" fill="#ffffff" textLength="47.5" lengthAdjust="spacingAndGlyphs">2026</text>
<text x="1504" y="1070" font-family="Liberation Sans" font-size="19" fill="#ffffff" textLength="95" lengthAdjust="spacingAndGlyphs">13:16:52</text>
<rect x="1605" y="1039" width="56" height="48" rx="4" fill="#737373" />
<g transform="translate(1617.0,1047.0)">
<path d="M8.6,6.4 L10.5,2.1 H21.4 L23.3,6.4 H29 Q31.2,6.4 31.2,8.6 V25.6 Q31.2,27.8 29,27.8 H3 Q0.8,27.8 0.8,25.6 V8.6 Q0.8,6.4 3,6.4 Z" fill="#ffffff"/><circle cx="16" cy="16.5" r="6" fill="none" stroke="#737373" stroke-width="2.4"/>
</g>
<rect x="1665" y="1039" width="56" height="48" rx="4" fill="#737373" />
<g transform="translate(1677.0,1047.0)">
<path d="M10,8.2 V5 Q10,3.8 11.2,3.8 H20.8 Q22,3.8 22,5 V8.2" fill="none" stroke="#ffffff" stroke-width="1.8"/><rect x="1.5" y="8.2" width="29.5" height="19.6" rx="2.5" fill="#ffffff"/><path d="M6.8,8.2 V27.8 M25.5,8.2 V27.8" stroke="#737373" stroke-width="1.2"/><rect x="0" y="0" width="32" height="32" fill="url(#stip)"/>
</g>
<rect x="1725" y="1039" width="56" height="48" rx="4" fill="#737373" />
<g transform="translate(1737.0,1047.0)">
<path d="M15.8,3.2 L24.2,12.4 H8.2 Z" fill="#ffffff"/><rect x="12.8" y="12" width="6.4" height="8.2" fill="#ffffff"/><rect x="2.8" y="19.9" width="26.3" height="8.3" rx="1.2" fill="#ffffff"/><circle cx="21" cy="25" r="1" fill="#737373"/><circle cx="25.6" cy="25" r="1" fill="#737373"/><rect x="0" y="0" width="32" height="32" fill="url(#stip)"/>
</g>
<rect x="1785" y="1039" width="56" height="48" rx="4" fill="#737373" />
<g transform="translate(1797.0,1047.0)">
<rect x="12.6" y="2.1" width="6.6" height="9.6" fill="#ffffff"/><path d="M7.9,11.4 H24.2 L16,19.3 Z" fill="#ffffff"/><path d="M4.2,18.3 H11 L16,23 L21,18.3 H28 Q29.2,18.3 29.2,19.5 V25 Q29.2,26.2 28,26.2 H4.2 Q2.9,26.2 2.9,25 V19.5 Q2.9,18.3 4.2,18.3 Z" fill="#ffffff"/><circle cx="21" cy="23.1" r="1" fill="#737373"/><circle cx="25.6" cy="23.1" r="1" fill="#737373"/><rect x="0" y="0" width="32" height="32" fill="url(#stip)"/>
</g>
<rect x="1845" y="1039" width="56" height="48" rx="4" fill="#737373" />
<g transform="translate(1857.0,1047.0)">
<rect x="0" y="5.6" width="32" height="20.4" rx="10.2" fill="#ffffff"/><circle cx="23" cy="15.8" r="8.3" fill="#737373"/>
</g>
<circle cx="1915" cy="1073" r="1.6" fill="#777"/>
<circle cx="1909" cy="1079" r="1.6" fill="#777"/>
<circle cx="1915" cy="1079" r="1.6" fill="#777"/>
<circle cx="1903" cy="1085" r="1.6" fill="#777"/>
<circle cx="1909" cy="1085" r="1.6" fill="#777"/>
<circle cx="1915" cy="1085" r="1.6" fill="#777"/>
<path d="M706.6,850.6 L706.6,877.8 L712.6,871.8 L716.4,879 L721.2,876.8 L718,869.9 L726.4,869.9 Z" fill="#fff"/>
<path d="M708.4,855 L708.4,873.6 L713.1,868.9 L717.3,876.7 L718.9,876 L715.3,868.2 L722.2,868.2 Z" fill="#000"/>
</svg>
</body></html>
